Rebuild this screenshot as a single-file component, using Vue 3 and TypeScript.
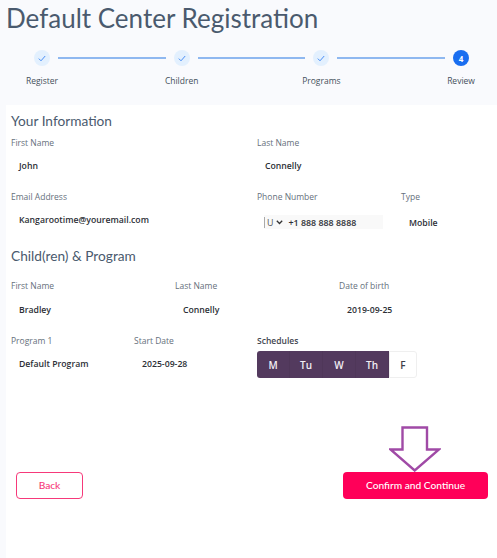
<script setup lang="ts">
const steps = ['Register', 'Children', 'Programs', 'Review']
const days = ['M', 'Tu', 'W', 'Th', 'F']
</script>

<template>
  <div class="page">
    <h1 class="title">Default Center Registration</h1>
    <div class="stepper">
      <template v-for="(s, i) in steps" :key="s">
        <div class="step">
          <div class="dot" :class="{ active: i === 3 }">
            <svg v-if="i < 3" width="8" height="7" viewBox="0 0 8 7"><path d="M0.8 3.6 L3 5.8 L7.2 1" fill="none" stroke="#4a8ef5" stroke-width="1"/></svg>
            <span v-else>4</span>
          </div>
          <div class="step-label">{{ s }}</div>
        </div>
        <div v-if="i < 3" class="line"></div>
      </template>
    </div>
    <main class="card">
      <h2 class="heading first">Your Information</h2>
      <div class="row two">
        <div><label>First Name</label><div class="val">John</div></div>
        <div><label>Last Name</label><div class="val">Connelly</div></div>
      </div>
      <div class="row phone-row">
        <div><label>Email Address</label><div class="val">Kangarootime@youremail.com</div></div>
        <div>
          <label>Phone Number</label>
          <div class="phone">
            <span class="bar"></span><span class="cc">U</span>
            <svg width="7" height="5" viewBox="0 0 7 5"><path d="M0.8 0.8 L3.5 3.5 L6.2 0.8" fill="none" stroke="#333" stroke-width="1.3"/></svg>
            <span class="num">+1 888 888 8888</span>
          </div>
        </div>
        <div><label>Type</label><div class="val type">Mobile</div></div>
      </div>
      <h2 class="heading second">Child(ren) &amp; Program</h2>
      <div class="row three">
        <div><label>First Name</label><div class="val">Bradley</div></div>
        <div><label>Last Name</label><div class="val">Connelly</div></div>
        <div><label>Date of birth</label><div class="val">2019-09-25</div></div>
      </div>
      <div class="row prog">
        <div><label>Program 1</label><div class="val">Default Program</div></div>
        <div><label>Start Date</label><div class="val">2025-09-28</div></div>
        <div>
          <label class="sched">Schedules</label>
          <div class="days">
            <div v-for="(d, i) in days" :key="d" class="day" :class="{ on: i < 4 }">{{ d }}</div>
          </div>
        </div>
      </div>
      <div class="actions">
        <button class="btn back">Back</button>
        <button class="btn confirm">
          Confirm and Continue
          <svg class="arrow" width="52" height="46" viewBox="0 0 52 46"><path d="M13.5 1.5 H38 V23.5 H50 L25.7 44.5 L1.5 23.5 H13.5 Z" fill="#fff" stroke="#a04aa6" stroke-width="2.4"/></svg>
        </button>
      </div>
    </main>
  </div>
</template>

<style>
html, body { margin: 0; background: #f9fafd; }
</style>

<style scoped>
.page {
  width: 497px;
  height: 558px;
  overflow: hidden;
  background: #f9fafd;
  font-family: "Open Sans", sans-serif;
}
.title {
  margin: 0;
  padding: 0 0 0 6px;
  height: 36px;
  font: 400 26px/36px "Lato", sans-serif;
  color: #4a5a6e;
  white-space: nowrap;
}
.stepper {
  display: flex;
  align-items: flex-start;
  height: 69px;
  padding: 14px 0 0 26px;
  box-sizing: border-box;
  width: 477px;
}
.step {
  width: 32px;
  flex: none;
  display: flex;
  flex-direction: column;
  align-items: center;
  white-space: nowrap;
}
.dot {
  width: 16px;
  height: 16px;
  border-radius: 50%;
  background: #e3f0fe;
  display: flex;
  align-items: center;
  justify-content: center;
}
.dot.active {
  background: #1a6ef0;
  color: #fff;
  font-size: 8px;
  font-weight: 700;
}
.step-label {
  margin-top: 8px;
  font-size: 8.5px;
  line-height: 14px;
  color: #45505c;
}
.line {
  flex: 1;
  height: 2px;
  margin-top: 7px;
  background: #8fb8f0;
}
.card {
  margin-left: 6px;
  height: 453px;
  background: #fff;
  padding: 0 9px 0 5px;
  box-sizing: border-box;
  position: relative;
  display: flex;
  flex-direction: column;
}
.heading {
  margin: 0;
  font: 400 13.7px/20px "Lato", sans-serif;
  color: #4a5a6e;
}
.heading.first { margin-top: 6px; }
.heading.second { margin-top: 17px; }
label {
  display: block;
  font-size: 8.5px;
  line-height: 12px;
  color: #66707c;
}
label.sched { color: #3f4650; font-weight: 600; }
.val {
  padding: 11px 0 0 8px;
  font-size: 8.7px;
  line-height: 12px;
  font-weight: 600;
  color: #2c2f36;
  white-space: nowrap;
}
.row { display: grid; }
.two {
  margin-top: 6px;
  grid-template-columns: 246px 1fr;
}
.phone-row {
  margin-top: 19px;
  grid-template-columns: 246px 144px 1fr;
}
.val.type { padding-top: 14px; }
.phone {
  margin-top: 12px;
  margin-left: 7px;
  width: 119px;
  height: 14px;
  background: #f9f9f9;
  display: flex;
  align-items: center;
  font-size: 8.9px;
  color: #2c2f36;
}
.bar { width: 1px; height: 11px; background: #aaa; margin-right: 2px; }
.cc { margin-right: 3px; color: #555; }
.num { margin-left: 5px; font-weight: 600; }
.three {
  margin-top: 14px;
  grid-template-columns: 164px 164px 1fr;
}
.three .val { padding-top: 12px; }
.prog {
  margin-top: 19px;
  grid-template-columns: 123px 123px 1fr;
}
.days {
  display: flex;
  margin-top: 4px;
  width: 160px;
  height: 27px;
}
.day {
  flex: 1;
  display: flex;
  align-items: center;
  justify-content: center;
  font-size: 10px;
  font-weight: 600;
  color: #3c4048;
  background: #fff;
  border: 1px solid #efefef;
  box-sizing: border-box;
}
.day.on {
  background: #533a5e;
  color: #f2eef4;
  border: 0;
  border-right: 1px solid #4f3759;
}
.day:first-child { border-radius: 3px 0 0 3px; }
.day:last-child { border-radius: 0 3px 3px 0; flex: 0 0 28px; }
.actions {
  display: flex;
  justify-content: space-between;
  margin-top: 94px;
  padding-left: 5px;
}
.btn {
  height: 27px;
  border-radius: 4px;
  font: 500 10.2px/1 "Lato", sans-serif;
  box-sizing: border-box;
  position: relative;
  cursor: pointer;
}
.back {
  width: 67px;
  background: #fff;
  border: 1.5px solid #f6397a;
  color: #f6397a;
}
.confirm {
  width: 145px;
  background: #ff0059;
  border: 0;
  color: #fff;
}
.arrow {
  position: absolute;
  left: 46px;
  top: -46px;
}
</style>
